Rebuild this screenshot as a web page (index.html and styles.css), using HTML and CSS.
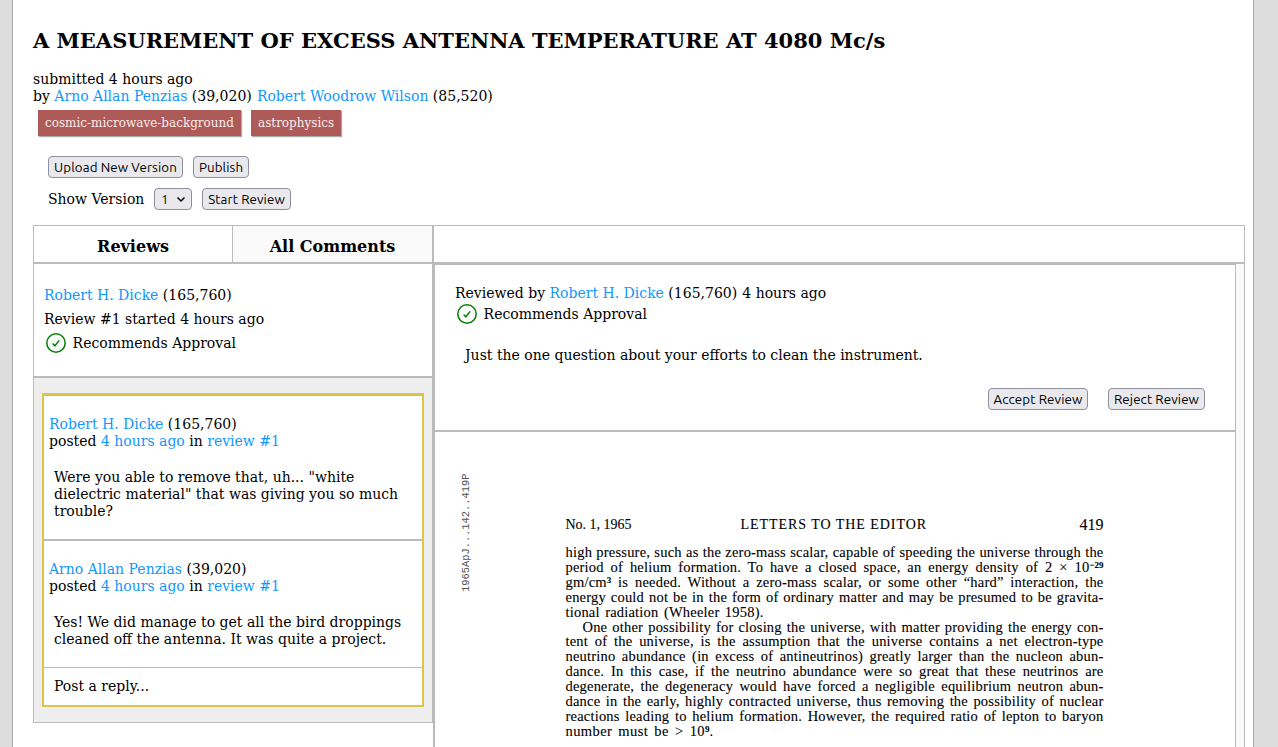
FILE: index.html
```html
<!DOCTYPE html>
<html lang="en">
<head>
<meta charset="utf-8">
<title>A Measurement of Excess Antenna Temperature at 4080 Mc/s</title>
<link rel="stylesheet" href="styles.css">
</head>
<body>
<main class="page">
  <header class="paper-header">
    <h1>A MEASUREMENT OF EXCESS ANTENNA TEMPERATURE AT 4080 Mc/s</h1>
    <div>submitted 4 hours ago</div>
    <div>by <a>Arno Allan Penzias</a> (39,020) <a class="next">Robert Woodrow Wilson</a> (85,520)</div>
    <div class="tags"><span class="tag tag-long">cosmic-microwave-background</span><span class="tag tag-short">astrophysics</span></div>
  </header>
  <div class="controls">
    <button class="upload">Upload New Version</button><button class="publish">Publish</button>
  </div>
  <div class="controls version">
    <span class="version-label">Show Version</span>
    <span class="select">1<svg width="10" height="7" viewBox="0 0 10 7"><path d="M1.5 1.5 5 5 8.5 1.5"/></svg></span>
    <button class="start">Start Review</button>
  </div>
  <nav class="tabs">
    <div class="tab tab-first">Reviews</div>
    <div class="tab tab-second">All Comments</div>
    <div class="tab-rest"></div>
  </nav>
  <div class="columns">
    <aside class="sidebar">
      <section class="summary">
        <div><a>Robert H. Dicke</a> (165,760)</div>
        <div>Review #1 started 4 hours ago</div>
        <div class="verdict"><svg class="check" viewBox="0 0 20 20"><circle cx="10" cy="10" r="9.2"/><path d="M6.6 10.4 8.9 12.8 13.2 7.4"/></svg>Recommends Approval</div>
      </section>
      <section class="threads">
        <div class="thread">
          <article class="comment comment-first">
            <div><a>Robert H. Dicke</a> (165,760)</div>
            <div>posted <a>4 hours ago</a> in <a>review #1</a></div>
            <p>Were you able to remove that, uh... "white dielectric material" that was giving you so much trouble?</p>
          </article>
          <article class="comment comment-second">
            <div><a>Arno Allan Penzias</a> (39,020)</div>
            <div>posted <a>4 hours ago</a> in <a>review #1</a></div>
            <p>Yes! We did manage to get all the bird droppings cleaned off the antenna. It was quite a project.</p>
          </article>
          <div class="reply">Post a reply...</div>
        </div>
      </section>
    </aside>
    <section class="viewer">
      <div class="document">
        <div class="review">
          <div>Reviewed by <a>Robert H. Dicke</a> (165,760) <span class="next">4 hours ago</span></div>
          <div class="verdict"><svg class="check" viewBox="0 0 20 20"><circle cx="10" cy="10" r="9.2"/><path d="M6.6 10.4 8.9 12.8 13.2 7.4"/></svg>Recommends Approval</div>
          <p>Just the one question about your efforts to clean the instrument.</p>
          <div class="actions"><button class="accept">Accept Review</button><button class="reject">Reject Review</button></div>
        </div>
        <div class="sheet">
          <div class="bibcode">1965ApJ...142..419P</div>
          <div class="print">
            <div class="running-head"><span class="issue">No. 1, 1965</span><span class="head-title">LETTERS TO THE EDITOR</span><span class="folio">419</span></div>
            <div class="line">high pressure, such as the zero-mass scalar, capable of speeding the universe through the</div>
            <div class="line">period of helium formation. To have a closed space, an energy density of 2 × 10<sup>−29</sup></div>
            <div class="line">gm/cm<sup>3</sup> is needed. Without a zero-mass scalar, or some other “hard” interaction, the</div>
            <div class="line">energy could not be in the form of ordinary matter and may be presumed to be gravita-</div>
            <div class="line w198">tional radiation (Wheeler 1958).</div>
            <div class="line indent">One other possibility for closing the universe, with matter providing the energy con-</div>
            <div class="line">tent of the universe, is the assumption that the universe contains a net electron-type</div>
            <div class="line">neutrino abundance (in excess of antineutrinos) greatly larger than the nucleon abun-</div>
            <div class="line">dance. In this case, if the neutrino abundance were so great that these neutrinos are</div>
            <div class="line">degenerate, the degeneracy would have forced a negligible equilibrium neutron abun-</div>
            <div class="line">dance in the early, highly contracted universe, thus removing the possibility of nuclear</div>
            <div class="line">reactions leading to helium formation. However, the required ratio of lepton to baryon</div>
            <div class="line w148">number must be &gt; 10<sup>9</sup>.</div>
          </div>
        </div>
      </div>
    </section>
  </div>
</main>
</body>
</html>
```
FILE: styles.css
```css
* { box-sizing: border-box; }
html { height: 100%; overflow: hidden; }
body {
  margin: 0;
  height: 747px;
  overflow: hidden;
  background: #ddd;
  color: #000;
  font: 14px/17px "DejaVu Serif", serif;
}
a { color: #1297fb; }
p { margin: 0; }
.next { margin-left: 0.7px; }

.page {
  width: 1242px;
  height: 747px;
  margin-left: 12px;
  padding: 0 8px 0 20px;
  overflow: hidden;
  background: #fff;
  border: solid #aaa;
  border-width: 0 1px;
}
.paper-header { padding-top: 28px; }
h1 {
  margin: 0 0 18px;
  font-size: 21px;
  line-height: 25px;
  white-space: nowrap;
}
.tags { display: flex; gap: 10px; padding: 5px 0 0 5px; }
.tag {
  height: 26px;
  padding-left: 7px;
  background: #ae5a58;
  color: #f8eeee;
  font-size: 12px;
  line-height: 27px;
  box-shadow: 1px 1px 1px #aaa;
}
.tag-long { width: 203px; }
.tag-short { width: 90px; }

.controls { display: flex; gap: 10px; padding: 20px 0 0 15px; }
.controls.version { padding-top: 10px; margin-bottom: 15px; }
.version-label { width: 96px; line-height: 22px; white-space: nowrap; }
button, .select {
  height: 22px;
  padding: 0;
  border: 1px solid #8f8f9d;
  border-radius: 4px;
  background: #e9e9ed;
  color: #000;
  font: 13.333px/19px Ubuntu, "Noto Sans", sans-serif;
  letter-spacing: 0.1px;
  text-align: center;
  white-space: nowrap;
}
button { padding-top: 1px; }
.select {
  display: flex;
  align-items: center;
  justify-content: space-between;
  width: 38px;
  padding: 1px 5px 0 6px;
}
.select svg { fill: none; stroke: #000; stroke-width: 1.5; }
.upload { width: 135px; }
.publish { width: 56px; }
.start { width: 89px; }

.tabs {
  display: flex;
  width: 1212px;
  height: 39px;
  border: 1px solid #bbb;
  border-bottom-width: 2px;
}
.tab {
  height: 36px;
  font-size: 16px;
  font-weight: bold;
  line-height: 41px;
  text-align: center;
}
.tab-first { width: 198px; }
.tab-second { width: 200px; background: #fafafa; border-left: 1px solid #bbb; }
.tab-rest { flex: 1; border-left: 2px solid #bbb; }

.columns { display: flex; width: 1212px; height: 483px; }
.sidebar { width: 400px; }
.summary {
  height: 114px;
  padding: 19px 0 0 10px;
  border: solid #bbb;
  border-width: 0 1px 2px;
  line-height: 24px;
}
.verdict { display: flex; align-items: center; gap: 6.6px; }
.check {
  width: 20px;
  height: 20px;
  margin-left: 2px;
  fill: none;
  stroke: #008000;
  stroke-width: 1.5;
}
.threads {
  height: 345px;
  padding: 15px 8px 0;
  background: #eee;
  border: solid #bbb;
  border-width: 0 1px 1px;
}
.thread { height: 314px; border: 2px solid #dec546; background: #fff; }
.comment { padding-left: 5px; border: solid #bbb; border-width: 0 0 2px; }
.comment-first { height: 146px; padding-top: 20px; border-top-width: 1px; }
.comment-second { height: 127px; padding-top: 20px; border-bottom-width: 1px; }
.comment p { padding: 19px 10px 0 5px; }
.reply { padding: 10px; }

.viewer { flex: 1; background: #fafafa; border-right: 1px solid #bbb; }
.document {
  width: 803px;
  height: 483px;
  background: #fff;
  border: solid #bbb;
  border-width: 1px 1px 0 2px;
}
.review {
  height: 167px;
  padding: 20px 30px 0 20px;
  border-bottom: 2px solid #bbb;
}
.review .verdict { height: 24px; }
.review p { padding: 21px 0 0 10px; }
.actions { display: flex; justify-content: flex-end; gap: 20px; padding-top: 24px; }
.accept { width: 100px; }
.reject { width: 97px; }

.sheet { display: flex; padding-top: 40px; }
.bibcode {
  width: 12px;
  height: 120px;
  margin: 0 0 0 25px;
  color: #555;
  font: 10.4px/12px "Liberation Mono", monospace;
  white-space: nowrap;
  writing-mode: vertical-rl;
  transform: rotate(180deg);
}
.print {
  width: 538px;
  margin: 46px 0 0 93.5px;
  color: #000;
  font: 14.5px/14.92px "Liberation Serif", serif;
  letter-spacing: 0.2px;
  -webkit-text-stroke: 0.1px #000;
}
.running-head { display: flex; height: 27px; }
.issue { width: 66px; font-size: 14px; letter-spacing: 0; white-space: nowrap; }
.head-title {
  width: 187px;
  margin-left: 109px;
  font-size: 14px;
  letter-spacing: 0.95px;
  white-space: nowrap;
}
.folio { margin-left: auto; font-size: 16px; letter-spacing: 0; }
.line { height: 14.92px; white-space: nowrap; text-align-last: justify; }
.line.indent { padding-left: 17px; }
.line.w198 { width: 198px; }
.line.w148 { width: 148px; letter-spacing: 0.4px; }
sup { font-size: 9px; line-height: 0; vertical-align: 4px; font-weight: bold; letter-spacing: 0; }
```
